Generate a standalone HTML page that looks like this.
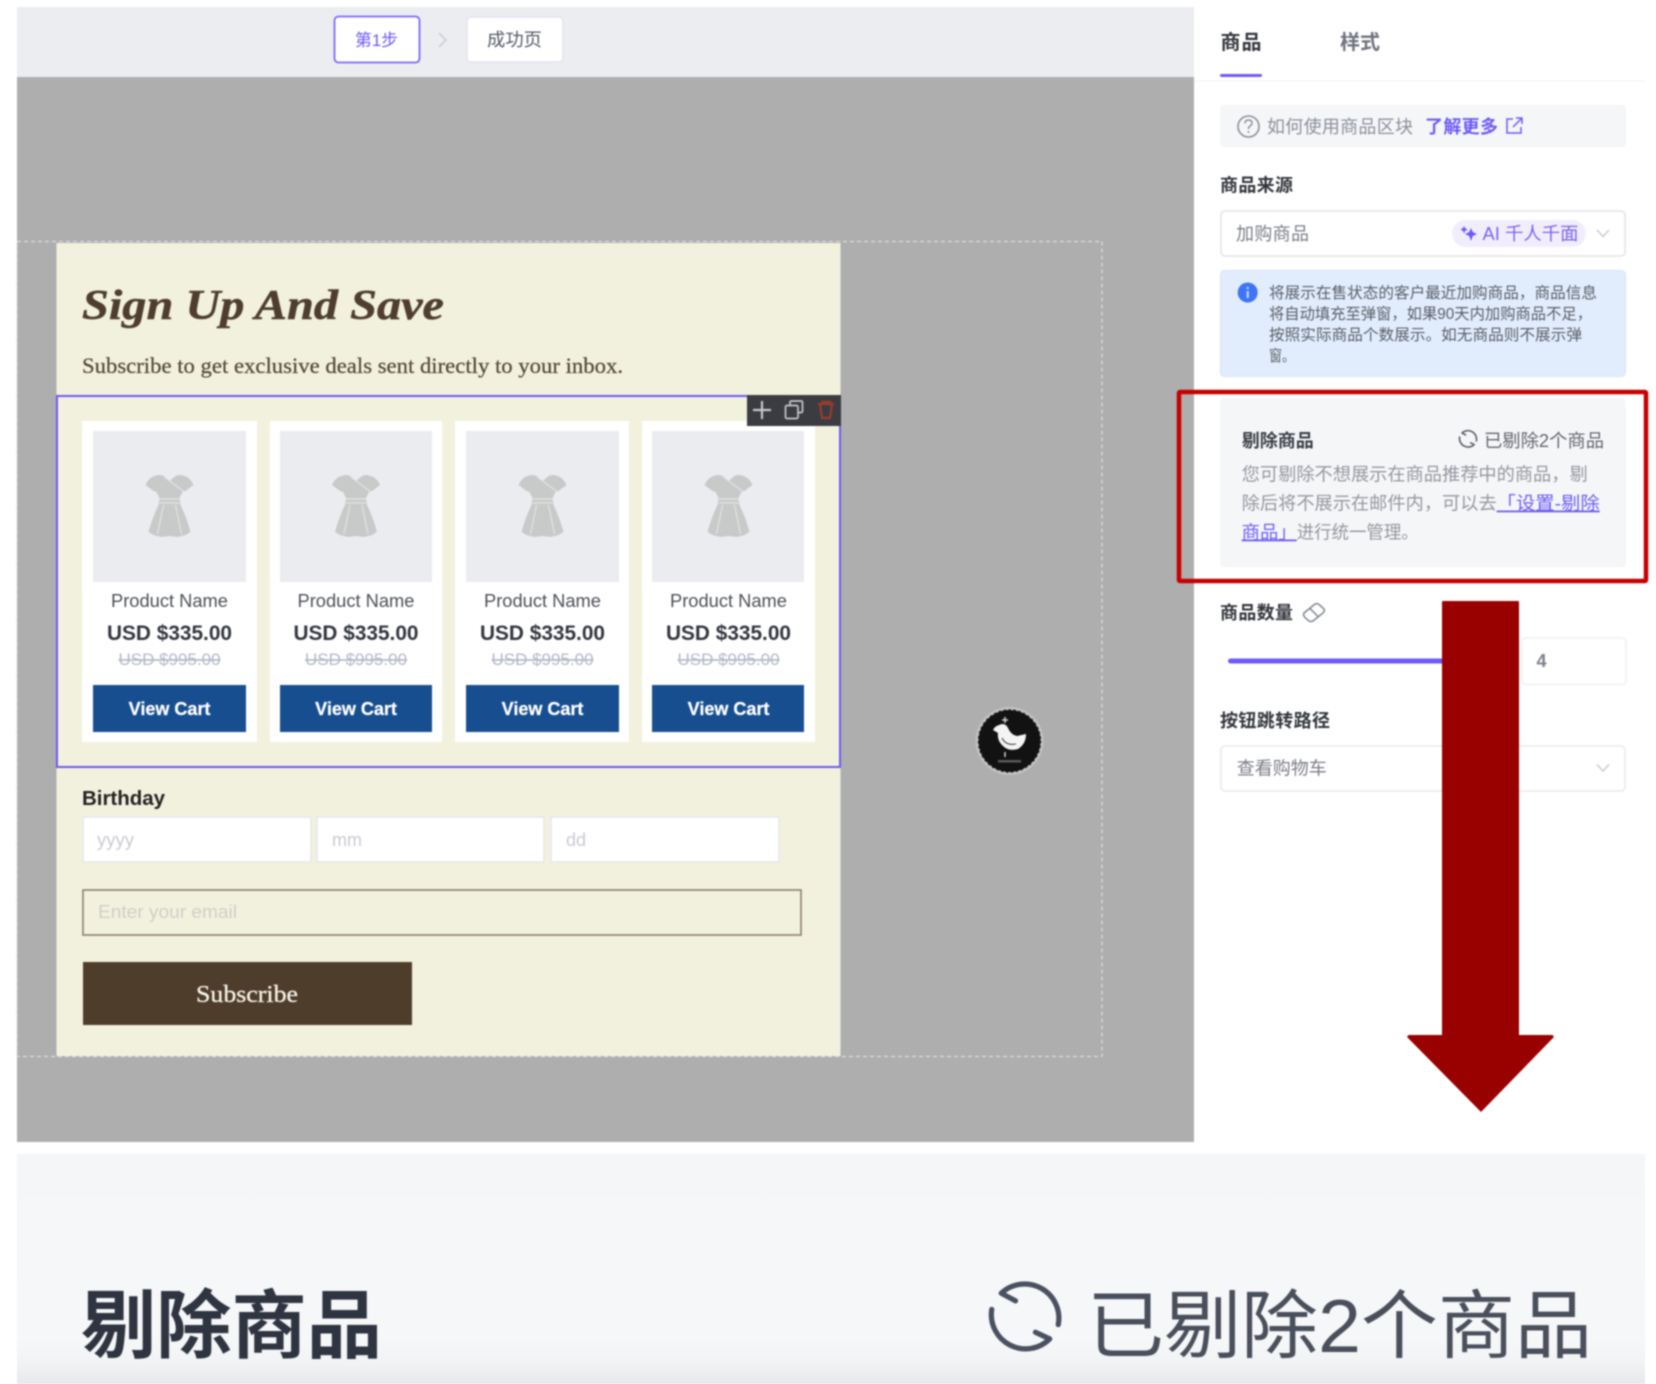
<!DOCTYPE html>
<html lang="zh-CN">
<head>
<meta charset="utf-8">
<title>商品区块</title>
<style>
html,body{margin:0;padding:0;background:#fff;width:1656px;height:1384px;overflow:hidden}
svg{display:block;filter:blur(.7px)}
text{font-family:"Liberation Sans","Noto Sans CJK SC",sans-serif;white-space:pre}
.s{font-family:"Liberation Serif","Noto Serif CJK SC",serif}
.b{font-weight:700}
</style>
</head>
<body>
<svg xmlns="http://www.w3.org/2000/svg" width="1656" height="1384" viewBox="0 0 1656 1384">
<defs>
<linearGradient id="fade" x1="0" y1="0" x2="0" y2="1">
<stop offset="0" stop-color="#f5f6f8"/><stop offset=".8" stop-color="#f6f7f9"/><stop offset=".9" stop-color="#f2f3f5"/><stop offset="1" stop-color="#e7e8eb"/>
</linearGradient>
<g id="dress">
<path d="M-15 11 Q-10 9 -6 11 L0 16 L6 11 Q10 9 15 11 Q21 13 24 20 L16 26 L13 27 L10 33 L11 40 Q17 52 21 67 L16 70 L8 72 L0 71 L-8 72 L-16 70 L-21 67 Q-17 52 -11 40 L-10 33 L-13 27 L-16 26 L-24 20 Q-21 13 -15 11 Z" fill="#c8cac9"/>
<path d="M-5 12 L15 27 M-10 34 L10 34 M-10 38 L10 38 M-6 40 L-12 69 M6 40 L12 69" fill="none" stroke="#e2e3e5" stroke-width="1.2"/>
</g>
<g id="spin" fill="none" stroke-linecap="round" stroke-linejoin="round">
<path d="M-10 -17 L-25 -25 A36 36 0 0 1 35 8"/>
<path d="M-35 -8 A36 36 0 0 0 26 23 L11 16"/>
</g>
</defs>

<!-- top bar -->
<rect x="17" y="7" width="1177" height="70" fill="#ecedf1"/>
<rect x="334.5" y="16.5" width="85" height="46" rx="4" fill="#fff" stroke="#7b69f7" stroke-width="1.8"/>
<text x="355" y="46" font-size="17" fill="#6e5af8" textLength="43" lengthAdjust="spacingAndGlyphs">第1步</text>
<path d="M439 33 L446 40 L439 47" fill="none" stroke="#c8cad0" stroke-width="1.5"/>
<rect x="467" y="17" width="96" height="45" rx="4" fill="#fff" stroke="#e2e3ee" stroke-width="1.4"/>
<text x="487" y="46" font-size="18" fill="#555a66" textLength="55" lengthAdjust="spacingAndGlyphs">成功页</text>

<!-- canvas -->
<rect x="17" y="77" width="1177" height="1065" fill="#aeaeae"/>
<rect x="17" y="241.5" width="1085" height="815" fill="none" stroke="#dcdcdc" stroke-width="1.2" stroke-dasharray="4 3"/>
<rect x="56.5" y="243" width="784" height="813" fill="#f2f1de"/>

<text class="s b" x="82" y="319" font-size="42" font-style="italic" fill="#4f3e2e" stroke="#4f3e2e" stroke-width=".5" textLength="362" lengthAdjust="spacingAndGlyphs">Sign Up And Save</text>
<text class="s" x="82" y="373" font-size="22.5" fill="#54483a" stroke="#54483a" stroke-width=".25" textLength="541" lengthAdjust="spacingAndGlyphs">Subscribe to get exclusive deals sent directly to your inbox.</text>

<!-- product section -->
<rect x="57" y="396" width="783" height="371" fill="none" stroke="#6e5af8" stroke-width="2"/>
<rect x="82" y="421" width="175" height="321" fill="#fff"/>
<rect x="270" y="421" width="172" height="321" fill="#fff"/>
<rect x="455" y="421" width="174" height="321" fill="#fff"/>
<rect x="642" y="421" width="173" height="321" fill="#fff"/>
<rect x="93" y="431" width="153" height="151" fill="#ebecf0"/>
<rect x="280" y="431" width="152" height="151" fill="#ebecf0"/>
<rect x="466" y="431" width="153" height="151" fill="#ebecf0"/>
<rect x="652" y="431" width="152" height="151" fill="#ebecf0"/>
<use href="#dress" transform="translate(169.5 465)"/>
<use href="#dress" transform="translate(356 465)"/>
<use href="#dress" transform="translate(542.5 465)"/>
<use href="#dress" transform="translate(728.5 465)"/>

<g font-size="18" fill="#4d5058" text-anchor="middle">
<text x="169.5" y="607" textLength="117" lengthAdjust="spacingAndGlyphs">Product Name</text>
<text x="356" y="607" textLength="117" lengthAdjust="spacingAndGlyphs">Product Name</text>
<text x="542.5" y="607" textLength="117" lengthAdjust="spacingAndGlyphs">Product Name</text>
<text x="728.5" y="607" textLength="117" lengthAdjust="spacingAndGlyphs">Product Name</text>
</g>
<g font-size="21.5" font-weight="700" fill="#333640" text-anchor="middle">
<text x="169.5" y="640" textLength="125" lengthAdjust="spacingAndGlyphs">USD $335.00</text>
<text x="356" y="640" textLength="125" lengthAdjust="spacingAndGlyphs">USD $335.00</text>
<text x="542.5" y="640" textLength="125" lengthAdjust="spacingAndGlyphs">USD $335.00</text>
<text x="728.5" y="640" textLength="125" lengthAdjust="spacingAndGlyphs">USD $335.00</text>
</g>
<g font-size="17" fill="#b3b8c8" text-anchor="middle" text-decoration="line-through">
<text x="169.5" y="665">USD $995.00</text>
<text x="356" y="665">USD $995.00</text>
<text x="542.5" y="665">USD $995.00</text>
<text x="728.5" y="665">USD $995.00</text>
</g>
<rect x="93" y="685" width="153" height="47" fill="#174e8f"/>
<rect x="280" y="685" width="152" height="47" fill="#174e8f"/>
<rect x="466" y="685" width="153" height="47" fill="#174e8f"/>
<rect x="652" y="685" width="152" height="47" fill="#174e8f"/>
<g font-size="18" font-weight="700" fill="#fff" stroke="#fff" stroke-width=".25" text-anchor="middle">
<text x="169.5" y="715">View Cart</text>
<text x="356" y="715">View Cart</text>
<text x="542.5" y="715">View Cart</text>
<text x="728.5" y="715">View Cart</text>
</g>

<!-- toolbar -->
<rect x="747" y="395" width="94" height="31" fill="#3a3c42"/>
<path d="M753 410 H771 M762 401 V419" fill="none" stroke="#c4c6cc" stroke-width="2.2"/>
<path d="M790 405 V402.5 Q790 401 791.5 401 H801 Q802.5 401 802.5 402.5 V411 Q802.5 412.5 801 412.5 H798" fill="none" stroke="#c4c6cc" stroke-width="1.7"/>
<rect x="785.5" y="405.5" width="12.5" height="13" rx="1.5" fill="none" stroke="#c4c6cc" stroke-width="1.7"/>
<path d="M818 404 H834 M822 404 V402 H830 V404 M820 404 L822 418 H830 L832 404" fill="none" stroke="#9c3b2b" stroke-width="2.2"/>

<!-- bird badge -->
<circle cx="1009.5" cy="741" r="34" fill="#c2c2c2"/>
<circle cx="1009.5" cy="741" r="31" fill="#121212" stroke="#121212" stroke-width="1.5" stroke-dasharray="2 3"/>
<path d="M993 730 Q995 726 999 725 Q1005 722 1008 728 Q1011 735 1017 736 L1026 734 Q1026 744 1018 749 Q1008 752 1002 745 Q997 740 998 733 Z" fill="#f4f4f4"/>
<path d="M1002 738 Q1006 746 1016 744" fill="none" stroke="#444" stroke-width="1.1"/>
<path d="M1002 720 H1008 M1005 717 V723 M1005 752 V757" stroke="#cfcfcf" stroke-width="1.5"/>
<rect x="998" y="760" width="23" height="2.5" fill="#5a5a5a"/>

<!-- form -->
<text x="82" y="805" font-size="20.5" font-weight="700" fill="#222" textLength="83" lengthAdjust="spacingAndGlyphs">Birthday</text>
<g fill="#fff" stroke="#e5e6ec" stroke-width="1.5">
<rect x="83" y="817" width="228" height="45"/>
<rect x="317" y="817" width="227" height="45"/>
<rect x="551" y="817" width="228" height="45"/>
</g>
<g font-size="18" fill="#c9cbd2">
<text x="97" y="846" textLength="37" lengthAdjust="spacingAndGlyphs">yyyy</text>
<text x="332" y="846">mm</text>
<text x="566" y="846">dd</text>
</g>
<rect x="83" y="890" width="718" height="45" fill="#f2f1de" stroke="#8c8268" stroke-width="1.6"/>
<text x="98" y="918" font-size="18" fill="#cfcfc8" textLength="139" lengthAdjust="spacingAndGlyphs">Enter your email</text>
<rect x="83" y="962" width="329" height="63" fill="#4f3d2c"/>
<text class="s" x="196" y="1002" font-size="24" fill="#f6f3e8" stroke="#f6f3e8" stroke-width=".3" textLength="102" lengthAdjust="spacingAndGlyphs">Subscribe</text>

<!-- tabs -->
<text class="b" x="1220.5" y="49" font-size="20" fill="#33363d" textLength="41">商品</text>
<text x="1340" y="49" font-size="20" font-weight="700" fill="#6f737e" textLength="40">样式</text>
<rect x="1220" y="74" width="42" height="3" rx="1.5" fill="#6e5af8"/>
<rect x="1194" y="80.5" width="451" height="1" fill="#eff0f3"/>

<!-- help -->
<rect x="1220" y="105" width="406" height="42" rx="3" fill="#f5f6f8"/>
<circle cx="1248.5" cy="126.5" r="10.5" fill="none" stroke="#8b8f9b" stroke-width="1.6"/>
<path d="M1245 123.5 Q1245 120 1248.5 120 Q1252 120 1252 123 Q1252 125 1250 126 Q1248.5 127 1248.5 129 M1248.5 131 V133" fill="none" stroke="#8b8f9b" stroke-width="1.5"/>
<text x="1267" y="133" font-size="18" fill="#8b8f9b" textLength="146">如何使用商品区块</text>
<text class="b" x="1425" y="133" font-size="18" fill="#6e5af8" textLength="73">了解更多</text>
<path d="M1513 119 H1507 V133 H1521 V127 M1513 127 L1522 118 M1516 118 H1522 V124" fill="none" stroke="#6e5af8" stroke-width="1.5"/>

<text class="b" x="1220" y="191.5" font-size="18" fill="#33363d" textLength="73">商品来源</text>
<rect x="1221" y="211" width="404" height="45" rx="4" fill="#fff" stroke="#e3e4e8" stroke-width="1.6"/>
<text x="1236" y="240" font-size="18" fill="#7b7e88" textLength="73">加购商品</text>
<rect x="1452" y="220" width="134" height="27" rx="13.5" fill="#f1edfd"/>
<path d="M1471 228 L1472.8 232 L1477 234 L1472.8 236 L1471 241 L1469.2 236 L1465 234 L1469.200 232 Z M1464 226 L1465 228 L1467.500 229.500 L1465 231 L1464 233.500 L1463 231 L1460.500 229.500 L1463 228 Z" fill="#6e5af8"/>
<text x="1482.500" y="240" font-size="18" fill="#7c62ef" textLength="96" lengthAdjust="spacingAndGlyphs">AI 千人千面</text>
<path d="M1597 230 L1603 236.500 L1609 230" fill="none" stroke="#c9cbd1" stroke-width="1.5"/>

<!-- info -->
<rect x="1220.500" y="270.500" width="405" height="106" rx="4" fill="#e1edfd" stroke="#d5e4fa"/>
<circle cx="1247.700" cy="292.500" r="10" fill="#3f74f6"/>
<rect x="1246.700" y="291" width="2" height="7" fill="#cfe0ff"/><rect x="1246.700" y="287" width="2" height="2" fill="#cfe0ff"/>
<g font-size="15.600" fill="#5a5e67">
<text x="1269" y="298" textLength="328" lengthAdjust="spacingAndGlyphs">将展示在售状态的客户最近加购商品，商品信息</text>
<text x="1269" y="319" textLength="323" lengthAdjust="spacingAndGlyphs">将自动填充至弹窗，如果90天内加购商品不足，</text>
<text x="1269" y="340" textLength="313" lengthAdjust="spacingAndGlyphs">按照实际商品个数展示。如无商品则不展示弹</text>
<text x="1269" y="361" textLength="26" lengthAdjust="spacingAndGlyphs">窗。</text>
</g>

<!-- remove products box -->
<rect x="1220" y="398" width="406" height="169" rx="4" fill="#f5f6f8"/>
<text class="b" x="1241.700" y="447" font-size="18" fill="#3c3f47" textLength="72">剔除商品</text>
<use href="#spin" transform="translate(1468 439) scale(.24)" stroke="#5a5f6b" stroke-width="6.500"/>
<text x="1484" y="447" font-size="18" fill="#63666f" textLength="120" lengthAdjust="spacingAndGlyphs">已剔除2个商品</text>
<g font-size="18" fill="#94979f">
<text x="1241.700" y="480.500" textLength="346" lengthAdjust="spacingAndGlyphs">您可剔除不想展示在商品推荐中的商品，剔</text>
<text x="1241.700" y="509.500" textLength="255" lengthAdjust="spacingAndGlyphs">除后将不展示在邮件内，可以去</text>
<text x="1496.700" y="509.500" fill="#6e5af8" text-decoration="underline" textLength="103" lengthAdjust="spacingAndGlyphs">「设置-剔除</text>
<text x="1241.700" y="538.500" fill="#6e5af8" text-decoration="underline" textLength="55" lengthAdjust="spacingAndGlyphs">商品」</text>
<text x="1296.700" y="538.500" textLength="122" lengthAdjust="spacingAndGlyphs">进行统一管理。</text>
</g>
<rect x="1179" y="392" width="467" height="189" rx="1" fill="none" stroke="#c80000" stroke-width="4.500"/>

<!-- quantity -->
<text class="b" x="1220" y="619" font-size="18" fill="#33363d" textLength="73">商品数量</text>
<path d="M1304 613 L1315 604 Q1317 603 1319 604.500 L1324 609 Q1325 611 1323 613 L1313 621 Q1311 622 1309 621 L1304.500 617 Q1303 615 1304 613 Z M1309.500 608 L1318 616.500" fill="none" stroke="#7e8592" stroke-width="1.500"/>
<rect x="1228" y="658.500" width="220" height="5" rx="2.500" fill="#6e5af8"/>
<rect x="1522" y="638" width="104" height="46.500" rx="4" fill="#fff" stroke="#eef0f4" stroke-width="1.600"/>
<text x="1536.500" y="667" font-size="18" font-weight="700" fill="#7c808a">4</text>

<text class="b" x="1220" y="727" font-size="18" fill="#33363d" textLength="110">按钮跳转路径</text>
<rect x="1221" y="746" width="404" height="45" rx="4" fill="#fff" stroke="#e9eaee" stroke-width="1.600"/>
<text x="1236.700" y="774.500" font-size="18" fill="#7b7e88" textLength="90">查看购物车</text>
<path d="M1597 764.500 L1603 771 L1609 764.500" fill="none" stroke="#c9cbd1" stroke-width="1.500"/>

<!-- big arrow -->
<path d="M1443 601 H1518 Q1519 601 1519 602 V1035 H1552 Q1555 1036 1553 1038 L1481 1112 L1408 1038 Q1406 1036 1409 1035 H1442 V602 Q1442 601 1443 601 Z" fill="#990000"/>

<!-- bottom zoomed strip -->
<rect x="17" y="1154" width="1628" height="230" fill="url(#fade)"/>
<text class="b" x="81" y="1352" font-size="75" fill="#2f3441" textLength="301" lengthAdjust="spacingAndGlyphs">剔除商品</text>
<use href="#spin" transform="translate(1025 1317) scale(.95)" stroke="#4a5160" stroke-width="5.500"/>
<text x="1087" y="1352" font-size="75" fill="#4a4f5c" textLength="505" lengthAdjust="spacingAndGlyphs">已剔除2个商品</text>
</svg>
</body>
</html>
